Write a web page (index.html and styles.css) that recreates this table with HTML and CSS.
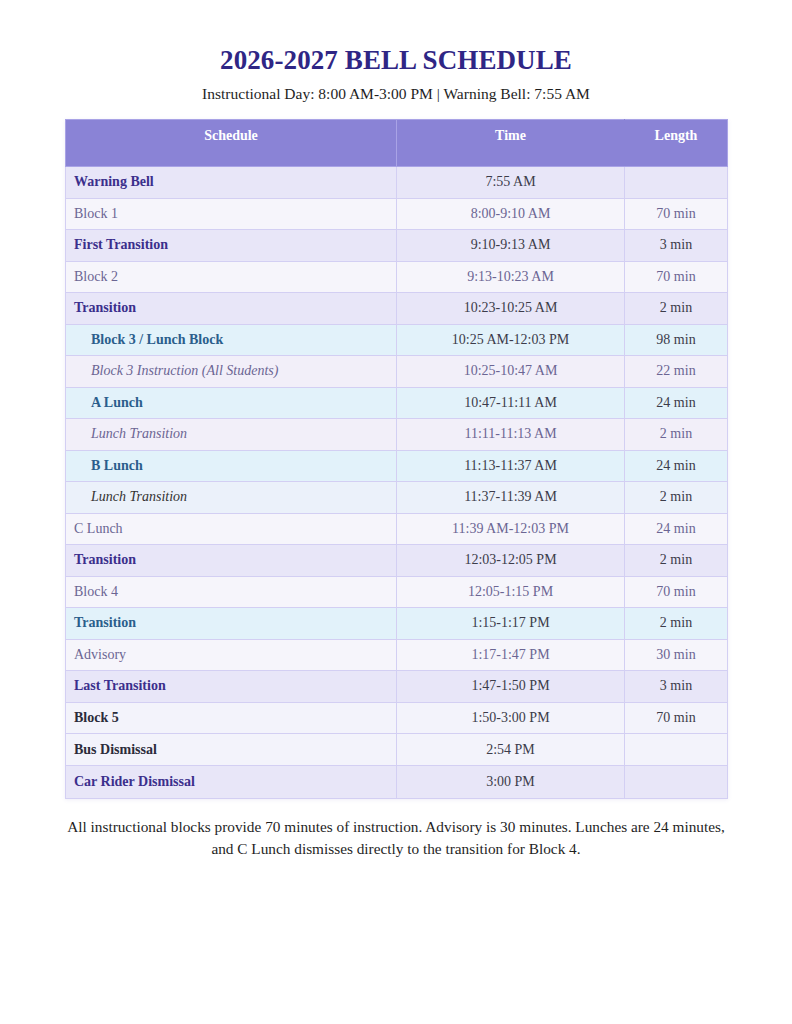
FILE: index.html
```html
<!DOCTYPE html>
<html lang="en">
<head>
<meta charset="utf-8">
<title>2026-2027 Bell Schedule</title>
<link rel="stylesheet" href="styles.css">
</head>
<body>
<main class="page">
  <h1 class="title">2026-2027 BELL SCHEDULE</h1>
  <p class="subtitle">Instructional Day: 8:00 AM-3:00 PM | Warning Bell: 7:55 AM</p>
  <table class="schedule">
    <colgroup>
      <col class="c-name">
      <col class="c-time">
      <col class="c-len">
    </colgroup>
    <thead>
      <tr>
        <th class="h-name">Schedule</th>
        <th class="h-time">Time</th>
        <th class="h-len">Length</th>
      </tr>
    </thead>
    <tbody>
      <tr class="r-trans"><td>Warning Bell</td><td>7:55 AM</td><td></td></tr>
      <tr class="r-block"><td>Block 1</td><td>8:00-9:10 AM</td><td>70 min</td></tr>
      <tr class="r-trans"><td>First Transition</td><td>9:10-9:13 AM</td><td>3 min</td></tr>
      <tr class="r-block"><td>Block 2</td><td>9:13-10:23 AM</td><td>70 min</td></tr>
      <tr class="r-trans"><td>Transition</td><td>10:23-10:25 AM</td><td>2 min</td></tr>
      <tr class="r-lunch ind"><td>Block 3 / Lunch Block</td><td>10:25 AM-12:03 PM</td><td>98 min</td></tr>
      <tr class="r-sub ind"><td>Block 3 Instruction (All Students)</td><td>10:25-10:47 AM</td><td>22 min</td></tr>
      <tr class="r-lunch ind"><td>A Lunch</td><td>10:47-11:11 AM</td><td>24 min</td></tr>
      <tr class="r-sub ind"><td>Lunch Transition</td><td>11:11-11:13 AM</td><td>2 min</td></tr>
      <tr class="r-lunch ind"><td>B Lunch</td><td>11:13-11:37 AM</td><td>24 min</td></tr>
      <tr class="r-sub2 ind"><td>Lunch Transition</td><td>11:37-11:39 AM</td><td>2 min</td></tr>
      <tr class="r-block"><td>C Lunch</td><td>11:39 AM-12:03 PM</td><td>24 min</td></tr>
      <tr class="r-trans"><td>Transition</td><td>12:03-12:05 PM</td><td>2 min</td></tr>
      <tr class="r-block"><td>Block 4</td><td>12:05-1:15 PM</td><td>70 min</td></tr>
      <tr class="r-lunch"><td>Transition</td><td>1:15-1:17 PM</td><td>2 min</td></tr>
      <tr class="r-block"><td>Advisory</td><td>1:17-1:47 PM</td><td>30 min</td></tr>
      <tr class="r-trans"><td>Last Transition</td><td>1:47-1:50 PM</td><td>3 min</td></tr>
      <tr class="r-key"><td>Block 5</td><td>1:50-3:00 PM</td><td>70 min</td></tr>
      <tr class="r-key tall"><td>Bus Dismissal</td><td>2:54 PM</td><td></td></tr>
      <tr class="r-trans taller"><td>Car Rider Dismissal</td><td>3:00 PM</td><td></td></tr>
    </tbody>
  </table>
  <p class="note">All instructional blocks provide 70 minutes of instruction. Advisory is 30 minutes. Lunches are 24 minutes, and C Lunch dismisses directly to the transition for Block 4.</p>
</main>
</body>
</html>
```

FILE: styles.css
```css
html, body {
  margin: 0;
  padding: 0;
  background: #ffffff;
}

body {
  font-family: "Liberation Serif", "Times New Roman", serif;
  color: #222;
}

.page {
  width: 662px;
  margin: 0 auto;
  padding-top: 42px;
}

.title {
  margin: 0;
  text-align: center;
  font-size: 27px;
  line-height: 36px;
  font-weight: 700;
  color: #2f2685;
  letter-spacing: 0.1px;
}

.subtitle {
  margin: 6px 0 0;
  text-align: center;
  font-size: 15.5px;
  line-height: 20px;
  color: #1f1f1f;
}

.schedule {
  margin-top: 15px;
  width: 662px;
  border-collapse: collapse;
  table-layout: fixed;
  font-size: 14px;
  box-shadow: 0 1px 4px rgba(120, 110, 200, 0.12);
}

.c-name { width: 331px; }
.c-time { width: 228px; }
.c-len { width: 103px; }

.schedule th {
  background: #8a83d6;
  color: #ffffff;
  font-weight: 700;
  height: 32px;
  padding: 0 8px 14px;
  text-align: center;
  border: 1px solid #a9a3e6;
  vertical-align: middle;
  line-height: 18px;
}

.schedule th.h-time { border-right-color: #8a83d6; }
.schedule th.h-len { border-left-color: #8a83d6; }

.schedule td {
  height: 30.5px;
  padding: 0 8px;
  border: 1px solid #d3cff3;
  text-align: center;
  color: #3c3c4a;
  vertical-align: middle;
  line-height: 18px;
}

.schedule td:first-child {
  text-align: left;
}

.schedule tr.tall td { height: 31px; }
.schedule tr.taller td { height: 32px; }

.ind td:first-child { padding-left: 25px; }

/* transitions / key events */
.r-trans td { background: #e8e6f8; }
.r-trans td:first-child { color: #3b2f8c; font-weight: 700; }

/* blocks */
.r-block td { background: #f6f5fb; color: #6b6593; }

/* lunch rows */
.r-lunch td { background: #e2f2fa; }
.r-lunch td:first-child { color: #2b5e8c; font-weight: 700; }

/* sub rows */
.r-sub td { background: #f2eff9; color: #6b6593; }
.r-sub td:first-child { font-style: italic; }

.r-sub2 td { background: #ebf1fa; }
.r-sub2 td:first-child { font-style: italic; color: #333; }

/* Block 5 / Bus */
.r-key td { background: #f3f3fb; }
.r-key td:first-child { color: #2b2b3a; font-weight: 700; }

.note {
  margin: 17px 0 0;
  text-align: center;
  font-size: 15.3px;
  line-height: 22px;
  color: #1f1f1f;
}
```
